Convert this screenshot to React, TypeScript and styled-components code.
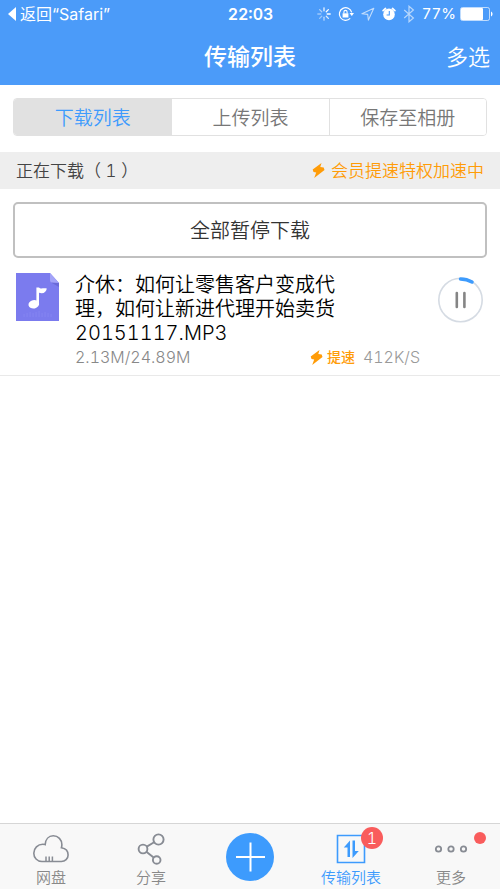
import React from "react";
import styled, { createGlobalStyle } from "styled-components";

const BLUE = "#3d9bfd";
const ORANGE = "#ff9c08";

const GlobalStyle = createGlobalStyle`
  *, *::before, *::after { box-sizing: border-box; }
  body {
    margin: 0;
    background: #fff;
    color: #000;
    font-family: Inter, "Noto Sans CJK SC", sans-serif;
    font-weight: 350;
    font-variant-numeric: tabular-nums;
  }
  button { font: inherit; color: inherit; border: 0; padding: 0; margin: 0; background: none; cursor: pointer; }
  a { color: inherit; text-decoration: none; }
  h1, h2, h3, p, ul { margin: 0; padding: 0; font-weight: inherit; list-style: none; }
  svg { display: block; flex: none; }
`;

const Page = styled.div`
  min-height: 100vh;
  display: flex;
  flex-direction: column;
`;

const Header = styled.header`
  background: #4b9bf9;
  color: #fff;
`;

const StatusBar = styled.div`
  display: grid;
  grid-template-columns: 1fr auto 1fr;
  align-items: center;
  height: 28px;
  padding: 0 7px 0 8px;
  font-size: 16px;
  line-height: 20px;
  font-weight: 400;
`;

const BackLink = styled.a`
  display: flex;
  align-items: center;
  gap: 4px;
  white-space: nowrap;
`;

const Clock = styled.time`
  font-weight: 600;
`;

const StatusIcons = styled.div`
  display: flex;
  align-items: center;
  justify-content: flex-end;
  gap: 7px;
`;

const Battery = styled.span`
  display: flex;
  align-items: center;
  gap: 4px;
  font-size: 15px;
`;

const NavBar = styled.div`
  display: grid;
  grid-template-columns: 1fr auto 1fr;
  align-items: center;
  height: 57px;
  padding: 0 10px;
`;

const Title = styled.h1`
  grid-column: 2;
  font-size: 23px;
  line-height: 32px;
  font-weight: 500;
`;

const NavAction = styled.button`
  justify-self: end;
  font-size: 22px;
  line-height: 32px;
`;

const Main = styled.main`
  flex: 1;
`;

const Segments = styled.div`
  display: grid;
  grid-template-columns: repeat(3, 1fr);
  margin: 13px 13px 16px;
  height: 38px;
  border: 1px solid #e1e1e1;
  border-radius: 4px;
  overflow: hidden;
`;

const Segment = styled.button<{ $active?: boolean }>`
  padding-top: 3px;
  font-size: 19px;
  line-height: 28px;
  color: ${(p) => (p.$active ? BLUE : "#777")};
  background: ${(p) => (p.$active ? "#e1e1e1" : "#fff")};
  & + & { border-left: 1px solid #e1e1e1; }
`;

const SectionHeader = styled.div`
  display: flex;
  align-items: center;
  justify-content: space-between;
  height: 37px;
  padding: 0 16px;
  background: #eee;
  color: #444;
  font-size: 17px;
  line-height: 24px;
`;

const SectionTitle = styled.h2`
  font-size: 17px;
`;

const Boost = styled.span<{ $small?: boolean }>`
  display: flex;
  align-items: center;
  gap: ${(p) => (p.$small ? 4 : 6)}px;
  color: ${ORANGE};
  font-size: ${(p) => (p.$small ? 14 : 17)}px;
  font-weight: ${(p) => (p.$small ? 500 : 350)};
`;

const PauseAll = styled.button`
  display: block;
  width: calc(100% - 26px);
  height: 56px;
  margin: 13px 13px 14px;
  padding-top: 2px;
  border: 2px solid #c0c0c0;
  border-radius: 5px;
  background: #fff;
  color: #333;
  font-size: 20px;
  line-height: 30px;
`;

const Item = styled.li`
  display: grid;
  grid-template-columns: 43px 1fr 46px;
  column-gap: 16px;
  padding: 1px 16px 6px;
  border-bottom: 1px solid #e9e9e9;
`;

const ItemBody = styled.div`
  min-width: 0;
`;

const FileName = styled.h3`
  max-width: 265px;
  font-size: 20px;
  line-height: 24px;
`;

const Meta = styled.div`
  display: flex;
  align-items: center;
  justify-content: space-between;
  height: 24px;
  padding-right: 2px;
  font-size: 16px;
  line-height: 24px;
  color: #888;
`;

const Speed = styled.span`
  display: flex;
  align-items: center;
  gap: 8px;
  color: #999;
`;

const PauseButton = styled.button`
  align-self: start;
  margin-top: 4px;
`;

const TabBar = styled.nav`
  position: sticky;
  bottom: 0;
  display: grid;
  grid-template-columns: repeat(5, 1fr);
  height: 66px;
  border-top: 1px solid #d6d6d6;
  background: #f8f8f8;
`;

const Tab = styled.a<{ $active?: boolean }>`
  display: flex;
  flex-direction: column;
  align-items: center;
  gap: 1px;
  padding: 8px 0 0 2px;
  color: ${(p) => (p.$active ? BLUE : "#888")};
  font-size: 15px;
  line-height: 22px;
`;

const TabIcon = styled.span`
  position: relative;
  display: flex;
  align-items: center;
  justify-content: center;
  width: 40px;
  height: 34px;
`;

const Badge = styled.span`
  position: absolute;
  top: -5px;
  right: -12px;
  width: 22px;
  height: 22px;
  border-radius: 50%;
  background: #f95c5c;
  color: #fff;
  font-size: 16px;
  line-height: 22px;
  text-align: center;
`;

const Dot = styled.span`
  position: absolute;
  top: 0;
  right: -15px;
  width: 12px;
  height: 12px;
  border-radius: 50%;
  background: #f95c5c;
`;

const AddButton = styled.button`
  place-self: center;
  width: 48px;
  height: 48px;
  border-radius: 50%;
  background: ${BLUE};
`;

function Bolt() {
  return (
    <svg width="13" height="15" viewBox="0 0 13 15" aria-hidden="true">
      <path d="M9.500 0 .7 6.500l.8 2.600 2.700.5L2.200 15l10.300-8-.8-2.500-3.400-.5z" fill={ORANGE} />
    </svg>
  );
}

function Spinner() {
  const opacities = [0.9, 1, 1, 0.8, 0.6, 0.45, 0.45, 0.55];
  return (
    <svg width="14" height="14" viewBox="-7 -7 14 14" aria-hidden="true">
      {opacities.map((o, i) => (
        <path key={i} d="M0-3.2V-6.2" stroke="#fff" strokeWidth="1.3" strokeLinecap="round" opacity={o} transform={`rotate(${i * 45})`} />
      ))}
    </svg>
  );
}

function RotationLock() {
  return (
    <svg width="16" height="16" viewBox="0 0 16 16" fill="none" stroke="#fff" aria-hidden="true">
      <path d="M13.7 6.3A6.3 6.3 0 1 0 12.2 12.4" strokeWidth="1.2" />
      <path d="M11.5 7h4.5l-2.2 3z" fill="#fff" stroke="none" />
      <path d="M4.600 7.3h5.8v4.200H4.600z" fill="#fff" stroke="none" />
      <path d="M5.900 7.5V6a1.6 1.6 0 0 1 3.2 0v1.5" strokeWidth="1.1" />
    </svg>
  );
}

function LocationArrow() {
  return (
    <svg width="14" height="14" viewBox="0 0 14 14" fill="none" stroke="#fff" opacity="0.65" aria-hidden="true">
      <path d="M12.8 1.2.9 6.8l5.8.6.7 5.7z" strokeWidth="1.1" strokeLinejoin="round" />
    </svg>
  );
}

function Alarm() {
  return (
    <svg width="14" height="14" viewBox="0 0 14 14" aria-hidden="true">
      <circle cx="7" cy="7.4" r="5.800" fill="#fff" />
      <path d="M1.100 3.600 3.500 1.500M10.500 1.500l2.400 2.100" stroke="#fff" strokeWidth="1.7" strokeLinecap="round" />
      <path d="M7.3 4v4H4.6" fill="none" stroke="#4b9bf9" strokeWidth="1.1" />
    </svg>
  );
}

function Bluetooth() {
  return (
    <svg width="12" height="18" viewBox="0 0 12 18" fill="none" stroke="#fff" opacity="0.6" aria-hidden="true">
      <path d="m1.2 5 9.2 8L6 16.8V1.2L10.4 5l-9.2 8" strokeWidth="1.2" />
    </svg>
  );
}

function BatteryIcon() {
  return (
    <svg width="33" height="14" viewBox="0 0 33 14" aria-hidden="true">
      <rect x=".5" y=".5" width="29" height="13" rx="2" fill="none" stroke="#fff" opacity=".65" />
      <rect x="1" y="1" width="22" height="12" rx="1" fill="#fff" />
      <path d="M31 4.5c2 .8 2 4.2 0 5z" fill="#fff" />
    </svg>
  );
}

function MusicFile() {
  return (
    <svg width="43" height="48" viewBox="0 0 43 48" aria-hidden="true">
      <path d="M0 0h34l9 10v38H0z" fill="#7b7bee" />
      <path d="m34 0 9 10h-6c-2 0-3-1-3-3z" fill="#a3a3f8" />
      <path d="M35 9.500 43 10v4z" fill="#6969d8" />
      <path d="M8 44v-3m3 3v-4m3 4v-5m3 5v-4m3 4v-5m3 5v-6m3 6v-4m3 4v-5m3 5v-4m3 4v-3" stroke="#8585f1" />
      <ellipse cx="17.8" cy="31.3" rx="5.4" ry="4.2" transform="rotate(-14 17.8 31.3)" fill="#fff" />
      <path d="M20.4 14.500h2.600c1.700 2 3.800.3 7.800 1-.4 3.300-3.200 5.900-7.800 4.300v11.500h-2.600z" fill="#fff" />
    </svg>
  );
}

function PauseRing() {
  return (
    <svg width="46" height="46" viewBox="0 0 46 46" fill="none" aria-hidden="true">
      <circle cx="22.500" cy="23" r="21.7" stroke="#d5dbe3" strokeWidth="1.6" />
      <path d="M22.500 1.900q6.300 0 11.500 3.100" stroke={BLUE} strokeWidth="3.500" strokeLinecap="round" />
      <path d="M18.800 16v14M26.400 16v14" stroke="#858585" strokeWidth="2.600" strokeLinecap="round" />
    </svg>
  );
}

function CloudIcon() {
  return (
    <svg width="36" height="28" viewBox="0 0 36 28" fill="none" stroke="#888c94" strokeWidth="1.6" aria-hidden="true">
      <path d="M9 26.500C4 26.500.8 22.700.8 18.200c0-5 4-9 9-9 1 0 1.800 0 2.400.3.300-5.200 3.500-8.700 8-8.700 5 0 8.700 4 8.700 9 0 1.100-.2 2-.5 2.900 3.800.6 6.700 3.300 6.700 7.200 0 3.800-3 6.600-6.800 6.600z" />
      <path d="M13 26v-4.500M16.200 26v-4.500M19.400 26v-4.500" strokeWidth="1.500" />
    </svg>
  );
}

function ShareIcon() {
  return (
    <svg width="28" height="32" viewBox="0 0 28 32" fill="none" stroke="#888c94" strokeWidth="1.900" aria-hidden="true">
      <circle cx="21.500" cy="6.500" r="5.100" />
      <circle cx="6" cy="16" r="4.400" />
      <circle cx="19.700" cy="27" r="3.800" />
      <path d="m9.800 13.600 7.300-4.400M9.400 18.800l7.200 5.800" />
    </svg>
  );
}

function TransferIcon() {
  return (
    <svg width="30" height="30" viewBox="0 0 30 30" fill={BLUE} aria-hidden="true">
      <path d="M1.500 1.500h27v27h-27z" fill="none" stroke={BLUE} strokeWidth="1.600" />
      <path d="M14 6.500V23h-2.500v-9.500H7.800zM16.500 6.500H19V17h3.800l-6.300 7z" />
    </svg>
  );
}

function MoreIcon() {
  return (
    <svg width="34" height="10" viewBox="0 0 34 10" fill="none" stroke="#888c94" strokeWidth="1.800" aria-hidden="true">
      <circle cx="4.500" cy="5" r="2.700" />
      <circle cx="17" cy="5" r="2.700" />
      <circle cx="29.500" cy="5" r="2.700" />
    </svg>
  );
}

export default function App() {
  return (
    <>
      <GlobalStyle />
      <Page>
        <Header>
          <StatusBar>
            <BackLink href="#safari">
              <svg width="8" height="14" viewBox="0 0 8 14" aria-hidden="true">
                <path d="M8 0v14L0 7z" fill="#fff" />
              </svg>
              返回“Safari”
            </BackLink>
            <Clock>22:03</Clock>
            <StatusIcons>
              <Spinner />
              <RotationLock />
              <LocationArrow />
              <Alarm />
              <Bluetooth />
              <Battery>
                77%
                <BatteryIcon />
              </Battery>
            </StatusIcons>
          </StatusBar>
          <NavBar>
            <Title>传输列表</Title>
            <NavAction type="button">多选</NavAction>
          </NavBar>
        </Header>

        <Main>
          <Segments>
            <Segment type="button" $active aria-pressed="true">下载列表</Segment>
            <Segment type="button" aria-pressed="false">上传列表</Segment>
            <Segment type="button" aria-pressed="false">保存至相册</Segment>
          </Segments>

          <SectionHeader>
            <SectionTitle>正在下载（ 1 ）</SectionTitle>
            <Boost>
              <Bolt />
              会员提速特权加速中
            </Boost>
          </SectionHeader>

          <PauseAll type="button">全部暂停下载</PauseAll>

          <ul>
            <Item>
              <MusicFile />
              <ItemBody>
                <FileName>介休：如何让零售客户变成代理，如何让新进代理开始卖货20151117.MP3</FileName>
                <Meta>
                  <span>2.13M/24.89M</span>
                  <Speed>
                    <Boost $small>
                      <Bolt />
                      提速
                    </Boost>
                    412K/S
                  </Speed>
                </Meta>
              </ItemBody>
              <PauseButton type="button" aria-label="暂停">
                <PauseRing />
              </PauseButton>
            </Item>
          </ul>
        </Main>

        <TabBar>
          <Tab href="#disk">
            <TabIcon><CloudIcon /></TabIcon>
            网盘
          </Tab>
          <Tab href="#share">
            <TabIcon><ShareIcon /></TabIcon>
            分享
          </Tab>
          <AddButton type="button" aria-label="添加">
            <svg width="48" height="48" viewBox="0 0 48 48" aria-hidden="true">
              <path d="M10 24h29M24.500 9.500v29" stroke="#fff" strokeWidth="2" />
            </svg>
          </AddButton>
          <Tab href="#transfer" $active aria-current="page">
            <TabIcon>
              <TransferIcon />
              <Badge>1</Badge>
            </TabIcon>
            传输列表
          </Tab>
          <Tab href="#more">
            <TabIcon>
              <MoreIcon />
              <Dot />
            </TabIcon>
            更多
          </Tab>
        </TabBar>
      </Page>
    </>
  );
}
